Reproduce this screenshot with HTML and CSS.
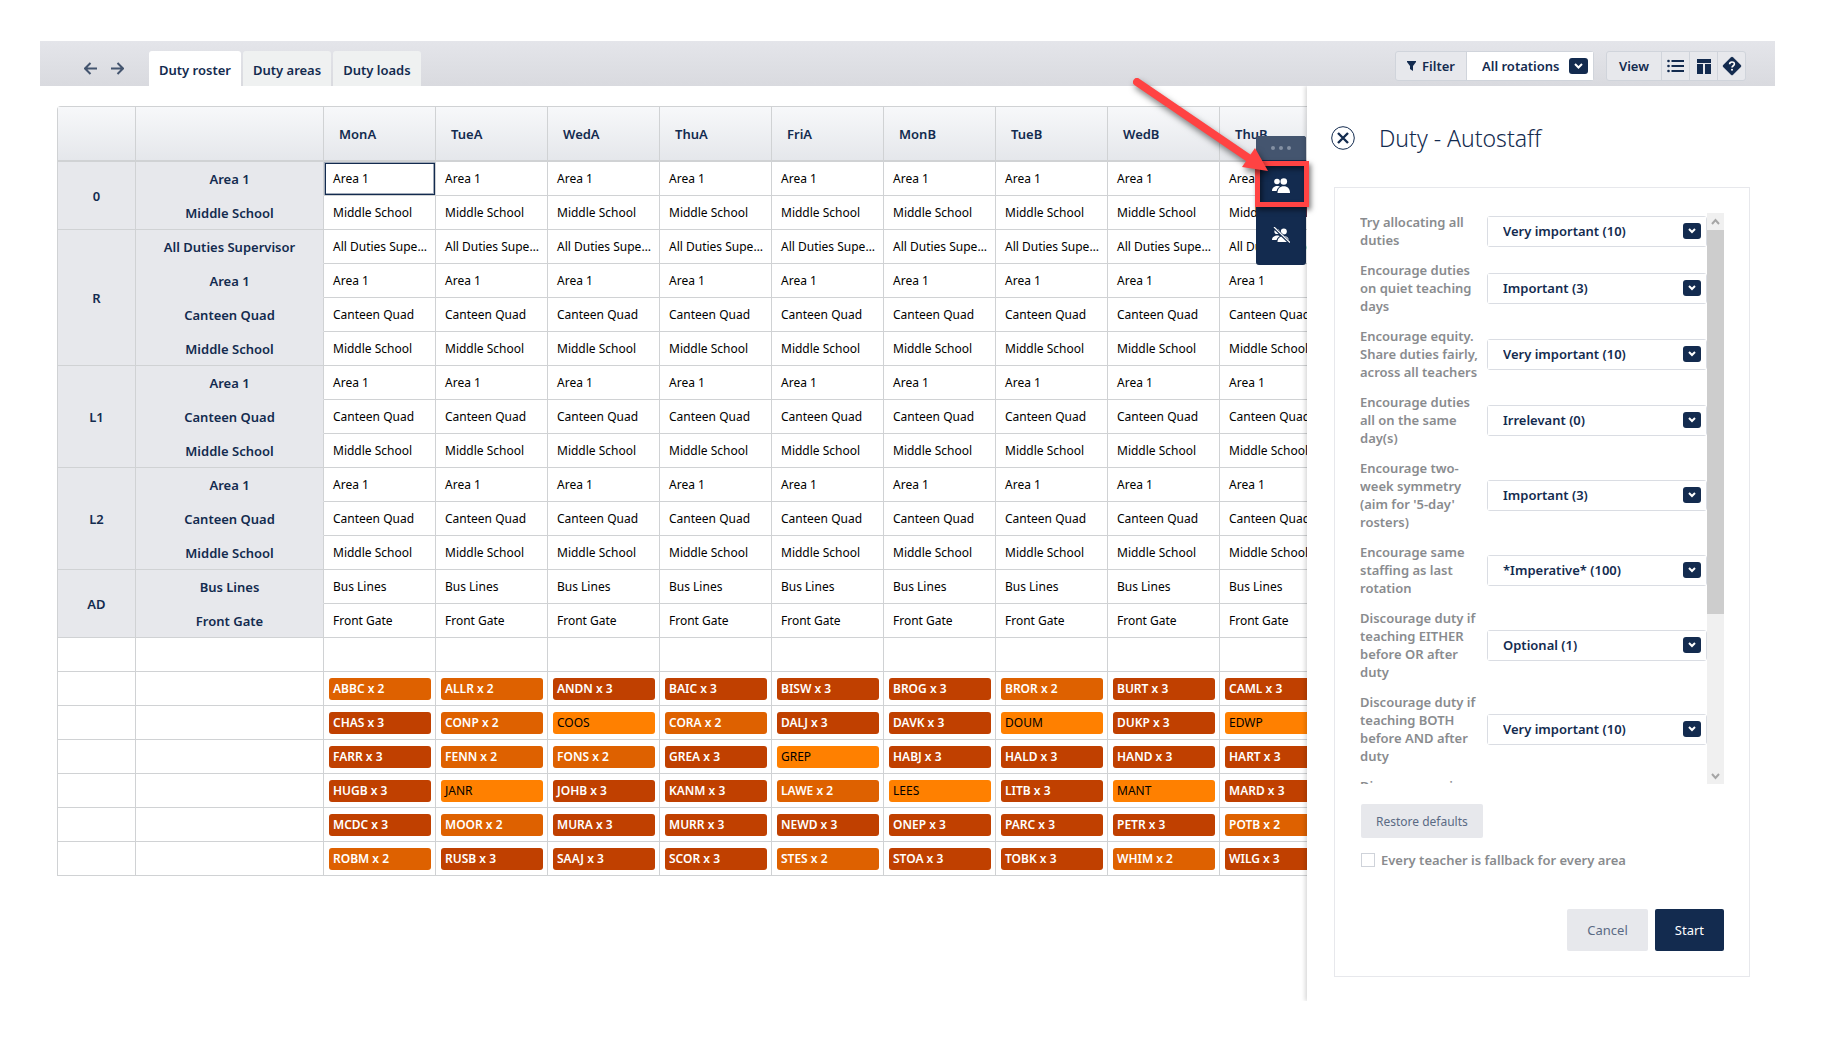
FILE: index.html
```html
<!DOCTYPE html>
<html lang="en">

<head>
  <meta charset="UTF-8">
  <title>Duty roster</title>
  <link rel="stylesheet" href="styles.css">
</head>

<body>
  <div class="app">
    <header class="topbar">
      <div class="history">
        <button class="arrow" aria-label="Back">
          <svg width="13" height="13" viewBox="0 0 13 13"><path d="M13 6.5H1M6.5 1L1 6.5L6.5 12" /></svg>
        </button>
        <button class="arrow" aria-label="Forward">
          <svg width="13" height="13" viewBox="0 0 13 13"><path d="M0 6.5H12M6.5 1L12 6.5L6.5 12" /></svg>
        </button>
      </div>
      <nav class="tabs">
        <a href="#roster" class="tab active">Duty roster</a>
        <a href="#areas" class="tab">Duty areas</a>
        <a href="#loads" class="tab">Duty loads</a>
      </nav>
      <div class="group">
        <label class="group-item filter" for="rotation">
          <svg width="9" height="10" viewBox="0 0 9 10"><path d="M0 0H9V1L6 5V10L3 8V5L0 1Z" fill="#132b4f" /></svg>
          Filter
        </label>
        <span class="select rotation">
          <select id="rotation">
            <option>All rotations</option>
          </select>
          <svg class="chevron" width="19" height="16" viewBox="0 0 19 16"><rect width="19" height="16" rx="3" /><path d="M6 6L9.5 9.5L13 6" /></svg>
        </span>
      </div>
      <div class="group">
        <button class="group-item view">View</button>
        <button class="group-item icon" aria-label="List">
          <svg width="17" height="14" viewBox="0 0 17 14" fill="#132b4f"><circle cx="1.5" cy="2" r="1.3" /><circle cx="1.5" cy="7" r="1.3" /><circle cx="1.5" cy="12" r="1.3" /><path d="M4.5 1H17V3H4.5ZM4.5 6H17V8H4.5ZM4.5 11H17V13H4.5Z" /></svg>
        </button>
        <button class="group-item icon" aria-label="Layout">
          <svg width="14" height="15" viewBox="0 0 14 15" fill="#132b4f"><path d="M0 0H14V4H0ZM0 5H6V15H0ZM8 5H14V15H8Z" /></svg>
        </button>
        <button class="group-item icon" aria-label="Help">
          <svg width="20" height="20" viewBox="0 0 20 20"><rect x="3.5" y="3.5" width="13" height="13" rx="1" transform="rotate(45 10 10)" fill="#132b4f" stroke="#132b4f" /><path d="M7.6 8.2C7.6 5.2 12.4 5.2 12.4 8.1C12.4 9.7 10 9.8 10 11.6" fill="none" stroke="#fff" stroke-width="1.6" /><circle cx="10" cy="13.8" r="1" fill="#fff" /></svg>
        </button>
      </div>
    </header>

    <div class="content">
      <main class="roster">
        <table>
          <colgroup>
            <col class="col-period">
            <col class="col-area">
          </colgroup>
          <thead>
            <tr>
              <th></th>
              <th></th>
              <th>MonA</th>
              <th>TueA</th>
              <th>WedA</th>
              <th>ThuA</th>
              <th>FriA</th>
              <th>MonB</th>
              <th>TueB</th>
              <th>WedB</th>
              <th>ThuB</th>
            </tr>
          </thead>
          <tbody id="rows"></tbody>
        </table>
      </main>

      <div class="tools">
        <div class="handle"><i></i><i></i><i></i></div>
        <button class="tool" aria-label="Autostaff">
          <svg width="18" height="15" viewBox="0 0 18 15" fill="#fff"><circle cx="5" cy="3.5" r="2.8" /><circle cx="11.8" cy="3.5" r="3.3" /><path d="M0 13C0 9.5 2.5 8 5.5 8C6.5 8 7.5 8.3 8 8.6C6.3 9.5 5 11 4.6 13Z" /><path d="M5.500 15C5.500 11 8 8.300 11.800 8.300S18 11 18 15Z" /></svg>
        </button>
        <button class="tool" aria-label="Unstaff">
          <svg width="18" height="16" viewBox="0 0 18 16" fill="#fff"><circle cx="5" cy="4.5" r="2.6" /><circle cx="11.8" cy="4.5" r="3" /><path d="M0 13C0 10 2.5 8.5 5.5 8.5C6.5 8.5 7.5 8.8 8 9.1C6.3 10 5 11.5 4.6 13Z" /><path d="M5.5 15C5.5 11.5 8 9 11.8 9S17 11.5 17 15Z" /><path d="M1.5 0L18 16" stroke="#132b4f" stroke-width="3" /><path d="M2 0L18 15.5" stroke="#fff" stroke-width="1.2" /></svg>
        </button>
      </div>
      <div class="marker"></div>
      <svg class="pointer" width="150" height="110" viewBox="0 0 150 110">
        <path d="M13 10L126 87" stroke="#ff4343" stroke-width="8" stroke-linecap="round" />
        <path d="M118 95L131 76L144 99Z" fill="#ff4343" />
      </svg>

      <aside class="panel">
        <div class="panel-head">
          <button class="close" aria-label="Close">
            <svg width="24" height="24" viewBox="0 0 24 24" fill="none" stroke="#132b4f"><circle cx="12" cy="12" r="11.3" /><path d="M7 7L17 17M17 7L7 17" stroke-width="2.4" /></svg>
          </button>
          <h1>Duty - Autostaff</h1>
        </div>
        <form class="card">
          <div class="scroller">
            <div class="settings" id="settings"></div>
            <div class="scrollbar">
              <svg width="17" height="17" viewBox="0 0 17 17"><path d="M5 11L8.5 7L12 11" /></svg>
              <div class="thumb"></div>
              <svg width="17" height="17" viewBox="0 0 17 17"><path d="M5 7L8.5 11L12 7" /></svg>
            </div>
          </div>
          <button type="button" class="btn restore">Restore defaults</button>
          <div class="fallback">
            <input type="checkbox" id="fallback">
            <label for="fallback">Every teacher is fallback for every area</label>
          </div>
          <div class="actions">
            <button type="button" class="btn">Cancel</button>
            <button type="button" class="btn start">Start</button>
          </div>
        </form>
      </aside>
    </div>
  </div>
  <script src="script.js"></script>
</body>

</html>
```

FILE: styles.css
```css
* {
  box-sizing: border-box;
}

body {
  margin: 0;
  padding: 41px 53px 42px 40px;
  background: #fff;
  color: #132b4f;
  font-family: "Noto Sans", "Open Sans", sans-serif;
  font-size: 13px;
}

button,
select {
  font: inherit;
  color: inherit;
  margin: 0;
}

button {
  border: none;
  cursor: pointer;
}

/* top bar */
.topbar {
  display: flex;
  align-items: flex-end;
  height: 45px;
  padding-right: 29px;
  background: linear-gradient(#e4e5ea, #d9dadf);
}

.history {
  display: flex;
  align-items: center;
  gap: 14px;
  width: 109px;
  height: 35px;
  padding-left: 44px;
}

.arrow {
  display: flex;
  padding: 0;
  background: none;
}

.arrow path {
  fill: none;
  stroke: #44556f;
  stroke-width: 2;
}

.tabs {
  display: flex;
  gap: 2px;
  flex: 1;
}

.tab {
  height: 35px;
  padding: 0 10px;
  border-radius: 3px 3px 0 0;
  background: #eff1f1;
  color: #132b4f;
  font-weight: 600;
  line-height: 38px;
  text-decoration: none;
}

.tab.active {
  background: #fff;
}

.group {
  display: flex;
  height: 30px;
  margin: 0 0 5px 12px;
  border: 1px solid #d0d4db;
  border-radius: 3px;
  background: #e7e8ec;
  font-weight: 600;
}

.group-item {
  display: flex;
  align-items: center;
  justify-content: center;
  padding: 0;
  background: none;
}

.group-item + .group-item {
  border-left: 1px solid #d0d4db;
}

.filter {
  gap: 6px;
  width: 70px;
}

.view {
  width: 54px;
}

.icon {
  width: 28px;
}

.select {
  display: block;
  position: relative;
}

.select select {
  width: 100%;
  height: 100%;
  border: none;
  background: #fff;
  appearance: none;
  font-weight: 600;
  padding: 0 26px 0 15px;
}

.rotation {
  width: 127px;
  border-left: 1px solid #d0d4db;
}

.chevron {
  position: absolute;
  top: 6px;
  right: 5px;
  pointer-events: none;
}

.chevron rect {
  fill: #132b4f;
}

.chevron path {
  fill: none;
  stroke: #fff;
  stroke-width: 2;
}

/* roster */
.content {
  display: flex;
  position: relative;
}

.roster {
  flex: 1;
  min-width: 0;
  overflow: hidden;
  padding: 20px 0 0 17px;
}

table {
  width: 1275px;
  table-layout: fixed;
  border-collapse: separate;
  border-spacing: 0;
  border-top: 1px solid #d0d2d4;
  border-left: 1px solid #d0d2d4;
  border-radius: 4px 0 0 0;
  font-size: 12px;
}

.col-period {
  width: 78px;
}

.col-area {
  width: 188px;
}

th,
td {
  height: 34px;
  padding: 0;
  border-right: 1px solid #d0d2d4;
  border-bottom: 1px solid #d0d2d4;
}

th {
  font-size: 13px;
  font-weight: 600;
}

thead th {
  height: 55px;
  padding-left: 15px;
  border-bottom: 2px solid #d0d2d4;
  background: linear-gradient(#f7f8fa, #e5e7eb);
  text-align: left;
}

tbody th {
  background: #e7e8ec;
}

.inner {
  border-bottom-color: #e7e8ec;
}

td.duty {
  padding: 0 6px 0 9px;
  overflow: hidden;
  text-overflow: ellipsis;
  white-space: nowrap;
  color: #000;
}

td.selected {
  outline: 1px solid #132b4f;
  outline-offset: -2px;
  box-shadow: inset 0 0 0 2px #a1aab9;
}

.chip {
  height: 22px;
  margin: 0 4px 0 5px;
  padding-left: 4px;
  border-radius: 3px;
  font-weight: 600;
  line-height: 22px;
  color: #fff;
}

.load-1 {
  background: #ff8000;
  color: #000;
  font-weight: 400;
}

.load-2 {
  background: #de6100;
}

.load-3 {
  background: #c04000;
}

/* floating tools */
.tools {
  position: absolute;
  top: 50px;
  right: 469px;
  width: 50px;
  padding-bottom: 5px;
  border-radius: 3px;
  background: #132b4f;
  overflow: hidden;
}

.handle {
  display: flex;
  align-items: center;
  justify-content: center;
  gap: 4px;
  height: 24px;
  background: #44556f;
}

.handle i {
  width: 4px;
  height: 4px;
  border-radius: 2px;
  background: #8490a3;
}

.tool {
  display: flex;
  align-items: center;
  justify-content: center;
  width: 50px;
  height: 50px;
  background: none;
}

.marker {
  position: absolute;
  top: 75px;
  right: 466px;
  z-index: 2;
  width: 54px;
  height: 46px;
  border: 5px solid #ff4343;
  box-shadow: 2px 3px 5px rgba(0, 0, 0, 0.5), inset 2px 3px 5px rgba(0, 0, 0, 0.5);
}

.pointer {
  position: absolute;
  top: -14px;
  right: 501px;
  z-index: 3;
  overflow: visible;
  filter: drop-shadow(2px 4px 3px rgba(0, 0, 0, 0.5));
}

/* autostaff panel */
.panel {
  position: relative;
  width: 468px;
  padding: 38px 25px 24px 27px;
  background: #fff;
  box-shadow: -2px 0 4px rgba(0, 0, 0, 0.15);
  clip-path: inset(0 0 0 -8px);
}

.panel-head {
  display: flex;
  align-items: center;
  gap: 24px;
  height: 28px;
  margin: 0 0 35px -3px;
}

.close {
  display: flex;
  padding: 0;
  background: none;
}

h1 {
  margin: 0;
  font-size: 23px;
  font-weight: 300;
}

.card {
  padding: 25px;
  border: 1px solid #e7e8ec;
}

.scroller {
  display: flex;
  height: 571px;
}

.settings {
  flex: 1;
  overflow: hidden;
}

.setting {
  display: flex;
  align-items: center;
  margin-bottom: 12px;
  color: #898b8e;
  font-weight: 600;
  line-height: 18px;
}

.setting label {
  width: 127px;
  padding-right: 4px;
}

.setting .select {
  flex: 1;
  height: 31px;
  border: 1px solid #dadde3;
  border-radius: 3px;
  color: #132b4f;
}

.scrollbar {
  display: flex;
  flex-direction: column;
  width: 17px;
  background: #f0f0f0;
}

.scrollbar path {
  fill: none;
  stroke: #a6a6a6;
  stroke-width: 2;
}

.thumb {
  height: 384px;
  margin-bottom: auto;
  background: #cdcdcd;
}

.btn {
  height: 42px;
  padding: 0 20px;
  border-radius: 2px;
  background: #e7e8ec;
  color: #5a6a84;
}

.restore {
  height: 34px;
  margin: 20px 0 12px 1px;
  padding: 0 15px;
  font-size: 12px;
}

.fallback {
  display: flex;
  align-items: center;
  gap: 6px;
  height: 20px;
  margin-left: 1px;
  color: #898b8e;
  font-weight: 600;
}

.fallback input {
  width: 14px;
  height: 14px;
  margin: 0;
  border: 1px solid #cfd3da;
  background: #fff;
  appearance: none;
}

.actions {
  display: flex;
  justify-content: flex-end;
  gap: 7px;
  margin-top: 39px;
}

.btn.start {
  background: #132b4f;
  color: #fff;
}
```

FILE: script.js
```javascript
var duties = [
  { period: '0', areas: ['Area 1', 'Middle School'] },
  { period: 'R', areas: ['All Duties Supervisor', 'Area 1', 'Canteen Quad', 'Middle School'] },
  { period: 'L1', areas: ['Area 1', 'Canteen Quad', 'Middle School'] },
  { period: 'L2', areas: ['Area 1', 'Canteen Quad', 'Middle School'] },
  { period: 'AD', areas: ['Bus Lines', 'Front Gate'] }
];

var teachers = [
  ['ABBC 2', 'ALLR 2', 'ANDN 3', 'BAIC 3', 'BISW 3', 'BROG 3', 'BROR 2', 'BURT 3', 'CAML 3'],
  ['CHAS 3', 'CONP 2', 'COOS 1', 'CORA 2', 'DALJ 3', 'DAVK 3', 'DOUM 1', 'DUKP 3', 'EDWP 1'],
  ['FARR 3', 'FENN 2', 'FONS 2', 'GREA 3', 'GREP 1', 'HABJ 3', 'HALD 3', 'HAND 3', 'HART 3'],
  ['HUGB 3', 'JANR 1', 'JOHB 3', 'KANM 3', 'LAWE 2', 'LEES 1', 'LITB 3', 'MANT 1', 'MARD 3'],
  ['MCDC 3', 'MOOR 2', 'MURA 3', 'MURR 3', 'NEWD 3', 'ONEP 3', 'PARC 3', 'PETR 3', 'POTB 2'],
  ['ROBM 2', 'RUSB 3', 'SAAJ 3', 'SCOR 3', 'STES 2', 'STOA 3', 'TOBK 3', 'WHIM 2', 'WILG 3']
];

var settings = [
  ['Try allocating all duties', 'Very important (10)'],
  ['Encourage duties on quiet teaching days', 'Important (3)'],
  ['Encourage equity. Share duties fairly, across all teachers', 'Very important (10)'],
  ['Encourage duties all on the same day(s)', 'Irrelevant (0)'],
  ["Encourage two-week symmetry (aim for '5-day' rosters)", 'Important (3)'],
  ['Encourage same staffing as last rotation', '*Imperative* (100)'],
  ['Discourage duty if teaching EITHER before OR after duty', 'Optional (1)'],
  ['Discourage duty if teaching BOTH before AND after duty', 'Very important (10)']
];

var days = 9;
var html = '';

duties.forEach(function (group, g) {
  group.areas.forEach(function (area, i) {
    var last = i === group.areas.length - 1;
    html += '<tr>';
    if (i === 0) {
      html += '<th rowspan="' + group.areas.length + '">' + group.period + '</th>';
    }
    html += '<th class="' + (last ? '' : 'inner') + '">' + area + '</th>';
    for (var d = 0; d < days; d++) {
      html += '<td class="duty' + (g + i + d === 0 ? ' selected' : '') + '">' + area + '</td>';
    }
    html += '</tr>';
  });
});

html += '<tr>' + '<td></td>'.repeat(days + 2) + '</tr>';

teachers.forEach(function (row) {
  html += '<tr><td></td><td></td>';
  row.forEach(function (item) {
    var parts = item.split(' ');
    var text = parts[1] === '1' ? parts[0] : parts[0] + ' x ' + parts[1];
    html += '<td><div class="chip load-' + parts[1] + '">' + text + '</div></td>';
  });
  html += '</tr>';
});

document.getElementById('rows').innerHTML = html;

var list = '';
settings.forEach(function (s, i) {
  list += '<div class="setting"><label for="setting' + i + '">' + s[0] + '</label>' +
    '<span class="select"><select id="setting' + i + '"><option>' + s[1] + '</option></select>' +
    '<svg class="chevron" width="18" height="16" viewBox="0 0 18 16"><rect width="18" height="16" rx="3" />' +
    '<path d="M6 6L9 9L12 6" /></svg></span></div>';
});
// next setting only peeks out at the bottom of the list
list += '<div class="setting"><label>Discourage using</label></div>';
document.getElementById('settings').innerHTML = list;
```
